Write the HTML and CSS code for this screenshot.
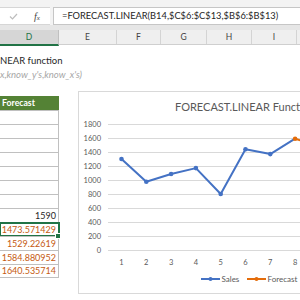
FILE: index.html
```html
<!DOCTYPE html>
<html lang="en">
<head>
  <meta charset="UTF-8" />
  <title>FORECAST.LINEAR function</title>
  <link rel="stylesheet" href="styles.css">
</head>
<body>
  <div class="formula-bar">
    <div class="fx-area">
      <svg class="check" width="9" height="7" viewBox="0 0 9 7"><polyline points="1,3.5 3.5,6 8,1" fill="none" stroke="#bdbdbd" stroke-width="1.2"/></svg>
      <span class="fx">f<small>x</small></span>
    </div>
    <div class="formula">=FORECAST.LINEAR(B14,$C$6:$C$13,$B$6:$B$13)</div>
  </div>
  <div class="band"></div>
  <div class="col-heads">
    <div class="col-head active col-d">D</div>
    <div class="col-head col-e">E</div>
    <div class="col-head col-f">F</div>
    <div class="col-head col-g">G</div>
    <div class="col-head col-h">H</div>
    <div class="col-head col-i">I</div>
    <div class="col-head"></div>
  </div>

  <div class="sheet">
    <div class="col-d">
      <div class="spacer"></div>
      <div class="row title-row">NEAR function</div>
      <div class="row syntax-row">x,know_y's,know_x's)</div>
      <div class="row"></div>
      <div class="row table-head">Forecast</div>
      <div class="row cell"></div>
      <div class="row cell"></div>
      <div class="row cell"></div>
      <div class="row cell"></div>
      <div class="row cell"></div>
      <div class="row cell"></div>
      <div class="row cell"></div>
      <div class="row cell">1590</div>
      <div class="row cell fc selected">1473.571429</div>
      <div class="row cell fc">1529.22619</div>
      <div class="row cell fc">1584.880952</div>
      <div class="row cell fc last">1640.535714</div>
    </div>

    <!-- chart floats over the sheet -->
    <div class="chart">
      <svg width="238" height="201" viewBox="0 0 238 201">
        <text class="chart-title" x="96" y="19">FORECAST.LINEAR Function</text>
        <g stroke="#d9d9d9" stroke-width="1">
          <line x1="29" x2="238" y1="158.5" y2="158.5"/>
          <line x1="29" x2="238" y1="144.5" y2="144.5"/>
          <line x1="29" x2="238" y1="130.5" y2="130.5"/>
          <line x1="29" x2="238" y1="116.5" y2="116.5"/>
          <line x1="29" x2="238" y1="102.5" y2="102.5"/>
          <line x1="29" x2="238" y1="88.5" y2="88.5"/>
          <line x1="29" x2="238" y1="74.5" y2="74.5"/>
          <line x1="29" x2="238" y1="60.5" y2="60.5"/>
          <line x1="29" x2="238" y1="46.5" y2="46.5"/>
          <line x1="29" x2="238" y1="32.5" y2="32.5"/>
        </g>
        <g class="axis-y" text-anchor="end">
          <text x="22" y="161">0</text>
          <text x="22" y="147">200</text>
          <text x="22" y="133">400</text>
          <text x="22" y="119">600</text>
          <text x="22" y="105">800</text>
          <text x="22" y="91">1000</text>
          <text x="22" y="77">1200</text>
          <text x="22" y="63">1400</text>
          <text x="22" y="49">1600</text>
          <text x="22" y="35">1800</text>
        </g>
        <g class="axis-x" text-anchor="middle">
          <text x="42.5" y="172.5">1</text>
          <text x="67.3" y="172.5">2</text>
          <text x="92.1" y="172.5">3</text>
          <text x="116.9" y="172.5">4</text>
          <text x="141.7" y="172.5">5</text>
          <text x="166.5" y="172.5">6</text>
          <text x="191.3" y="172.5">7</text>
          <text x="216.1" y="172.5">8</text>
        </g>
        <polyline class="sales" points="42.5,67 67.3,89.8 92.1,82 116.9,76.1 141.7,102 166.5,57.2 191.3,62.1 216.1,46.7"/>
        <g fill="#4472c4">
          <circle cx="42.5" cy="67" r="2.3"/>
          <circle cx="67.3" cy="89.8" r="2.3"/>
          <circle cx="92.1" cy="82" r="2.3"/>
          <circle cx="116.9" cy="76.1" r="2.3"/>
          <circle cx="141.7" cy="102" r="2.3"/>
          <circle cx="166.5" cy="57.2" r="2.3"/>
          <circle cx="191.3" cy="62.1" r="2.3"/>
        </g>
        <polyline class="forecast" points="216.1,46.7 240.9,54.9 265.7,51"/>
        <circle cx="216.1" cy="46.7" r="2.3" fill="#e46c0a"/>
        <g class="legend">
          <line x1="122" x2="141" y1="187" y2="187" stroke="#4472c4" stroke-width="2"/>
          <circle cx="131.5" cy="187" r="2" fill="#4472c4"/>
          <text x="142.5" y="190">Sales</text>
          <line x1="168" x2="187" y1="187" y2="187" stroke="#e46c0a" stroke-width="2"/>
          <circle cx="177.5" cy="187" r="2" fill="#e46c0a"/>
          <text x="188.5" y="190">Forecast</text>
        </g>
      </svg>
    </div>
  </div>
</body>
</html>
```

FILE: styles.css
```css
body {
  margin: 0;
  width: 300px;
  height: 300px;
  overflow: hidden;
  background-color: #fff;
  color: #262626;
  font-family: Lato, "Liberation Sans", sans-serif;
}

.formula-bar {
  display: flex;
  gap: 3px;
  height: 25px;
  padding-top: 7px;
  box-sizing: border-box;
  background-color: #f3f3f3;
}

.fx-area {
  width: 50px;
  height: 18px;
  display: flex;
  align-items: center;
  box-sizing: border-box;
  background-color: #fff;
  border-top: 1px solid #d6d6d6;
  border-bottom: 1px solid #d6d6d6;
}

.check {
  margin-left: 9px;
}

.fx {
  margin-left: 16px;
  font-family: "Liberation Serif", serif;
  font-style: italic;
  font-size: 10px;
  color: #444;
}

.fx small {
  font-size: 7px;
}

.formula {
  flex: 1;
  height: 18px;
  box-sizing: border-box;
  padding-left: 8px;
  border: 1px solid #c6c6c6;
  border-right: none;
  background-color: #fff;
  font-size: 9.3px;
  line-height: 16px;
  white-space: nowrap;
}

.band {
  height: 5px;
  background-color: #e6e6e6;
}

.col-heads {
  display: flex;
  height: 15px;
  background-color: #efefef;
  border-bottom: 1px solid #cfcfcf;
  box-sizing: border-box;
}

.col-head {
  flex-shrink: 0;
  box-sizing: border-box;
  border-right: 1px solid #d4d4d4;
  text-align: center;
  font-size: 8.5px;
  line-height: 15px;
  color: #444;
}

.col-head:last-child {
  flex: 1;
  border-right: none;
}

.col-head.active {
  background-color: #d6d6d6;
  color: #217346;
  border-bottom: 2px solid #217346;
  border-right-color: #c0c0c0;
  height: 16px;
}

.col-d { width: 59px; }
.col-e { width: 58px; }
.col-f { width: 44px; }
.col-g { width: 46px; }
.col-h { width: 45px; }
.col-i { width: 45px; }

.sheet {
  position: relative;
  height: 255px;
}

.spacer {
  height: 9px;
}

.row {
  height: 14px;
  box-sizing: border-box;
  white-space: nowrap;
  font-size: 9px;
  line-height: 14px;
}

.title-row {
  font-size: 9.5px;
}

.syntax-row {
  font-size: 9.5px;
  font-style: italic;
  color: #a6a6a6;
}

.table-head {
  background-color: #548235;
  color: #fff;
  font-weight: bold;
  font-size: 8.7px;
  padding-left: 2px;
}

.cell {
  position: relative;
  border-top: 1px solid #c0c0c0;
  border-right: 1px solid #c0c0c0;
  text-align: right;
  padding-right: 2px;
  line-height: 13px;
}

.cell.last {
  border-bottom: 1px solid #c0c0c0;
  line-height: 12px;
}

.fc {
  color: #c55a11;
}

.selected::after {
  content: "";
  position: absolute;
  left: -1px;
  right: -2px;
  top: -1px;
  bottom: -1px;
  border: 2px solid #217346;
}

.selected::before {
  content: "";
  position: absolute;
  right: -3px;
  bottom: -3px;
  width: 4px;
  height: 4px;
  background-color: #217346;
  border: 1px solid #fff;
  z-index: 1;
}

.chart {
  position: absolute;
  left: 78px;
  top: 46px;
  width: 240px;
  height: 203px;
  box-sizing: border-box;
  border: 1px solid #d9d9d9;
  background-color: #fff;
  overflow: hidden;
}

.chart svg {
  display: block;
}

.chart-title {
  font-size: 11px;
  fill: #595959;
}

.axis-y text,
.axis-x text {
  font-size: 7.5px;
  fill: #595959;
}

.sales,
.forecast {
  fill: none;
  stroke-width: 2;
  stroke-linejoin: round;
}

.sales { stroke: #4472c4; }
.forecast { stroke: #e46c0a; }

.legend text {
  font-size: 8px;
  fill: #595959;
}
```
